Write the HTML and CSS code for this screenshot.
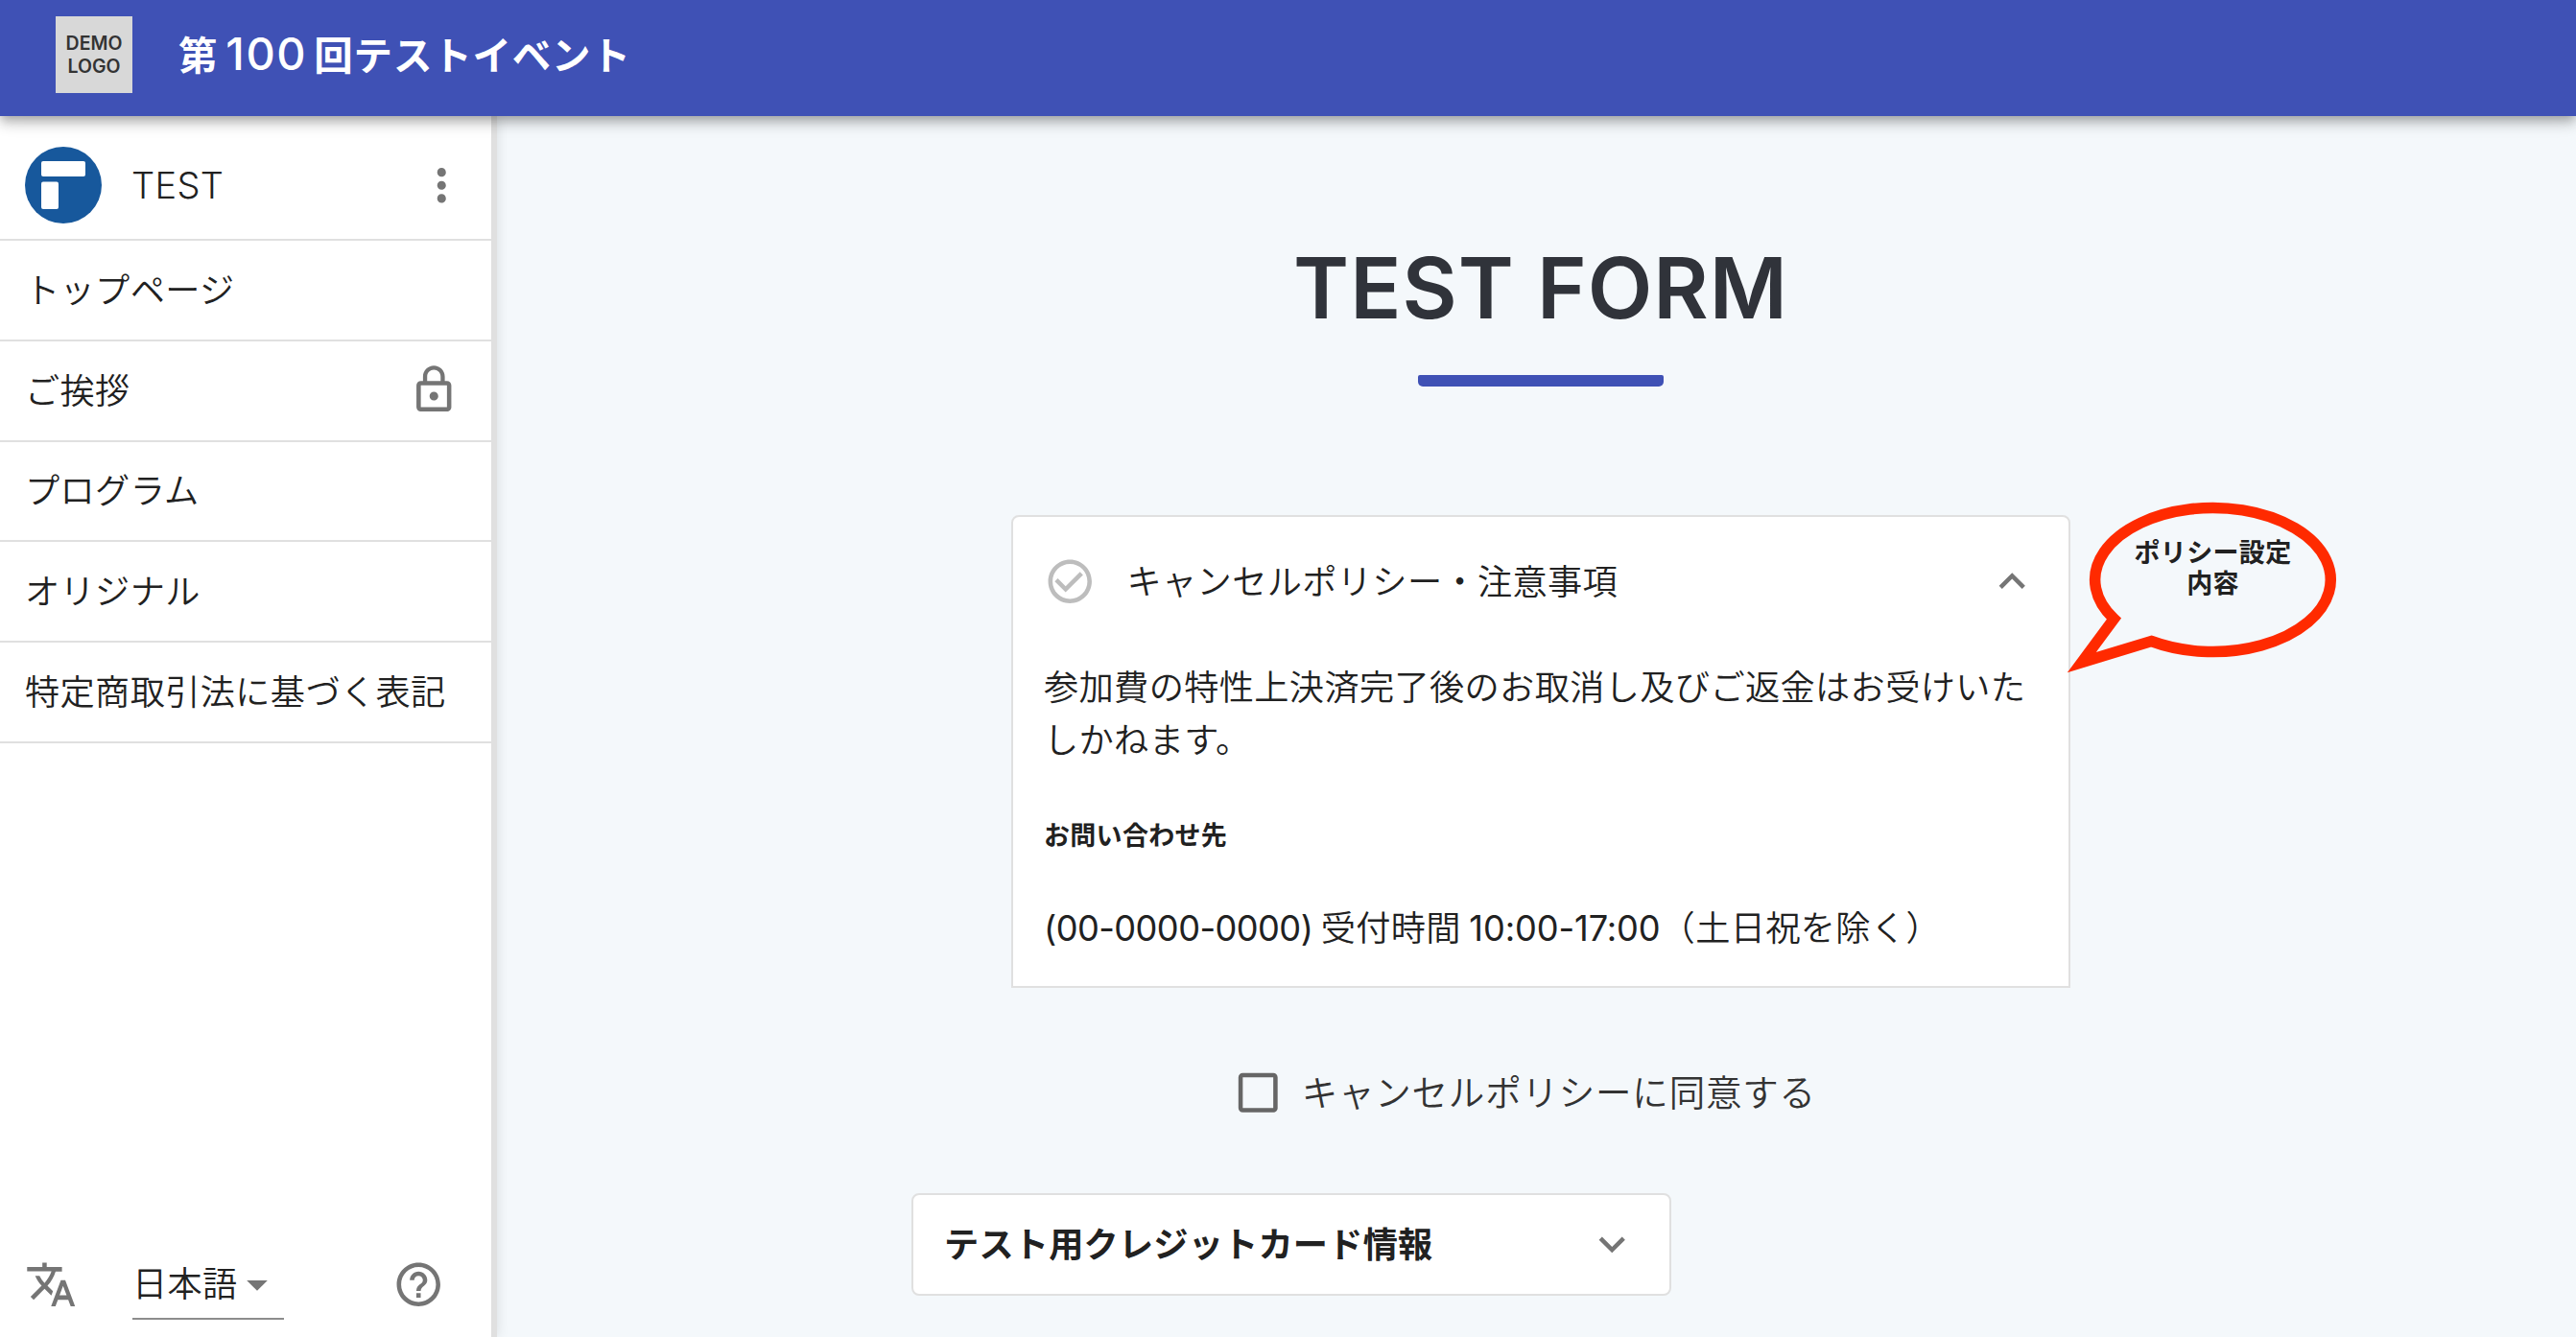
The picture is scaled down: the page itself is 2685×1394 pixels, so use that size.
FILE: index.html
```
<!DOCTYPE html>
<html lang="ja">
  <head>
    <meta charset="UTF-8" />
    <meta name="viewport" content="width=device-width, initial-scale=1.0" />
    <title>第100回テストイベント</title>
    <link rel="stylesheet" href="styles.css">
  </head>
  <body>
    <header class="app-bar">
      <div class="logo">DEMO<br />LOGO</div>
      <div class="event-name">第<span class="num">100</span>回テストイベント</div>
    </header>

    <div class="page">
      <aside class="sidebar">
        <div class="account">
          <svg class="avatar" viewBox="0 0 80 80">
            <circle cx="40" cy="40" r="40" fill="#17589c" />
            <rect x="17" y="15" width="46" height="16" rx="2" fill="#fff" />
            <rect x="17" y="36.5" width="18" height="28.5" rx="2" fill="#fff" />
          </svg>
          <span class="account-name">TEST</span>
          <svg class="icon" viewBox="0 0 24 24">
            <path d="M12 8c1.1 0 2-.9 2-2s-.9-2-2-2-2 .9-2 2 .9 2 2 2zm0 2c-1.1 0-2 .9-2 2s.9 2 2 2 2-.9 2-2-.9-2-2-2zm0 6c-1.1 0-2 .9-2 2s.9 2 2 2 2-.9 2-2-.9-2-2-2z" />
          </svg>
        </div>
        <nav class="menu">
          <a class="menu-item">トップページ</a>
          <a class="menu-item">
            ご挨拶
            <svg class="icon" viewBox="0 0 24 24">
              <path d="M12 17c1.1 0 2-.9 2-2s-.9-2-2-2-2 .9-2 2 .9 2 2 2zm6-9h-1V6c0-2.76-2.24-5-5-5S7 3.24 7 6v2H6c-1.1 0-2 .9-2 2v10c0 1.1.9 2 2 2h12c1.1 0 2-.9 2-2V10c0-1.1-.9-2-2-2zM8.9 6c0-1.71 1.39-3.1 3.1-3.1s3.1 1.39 3.1 3.1v2H8.9V6zM18 20H6V10h12v10z" />
            </svg>
          </a>
          <a class="menu-item">プログラム</a>
          <a class="menu-item">オリジナル</a>
          <a class="menu-item">特定商取引法に基づく表記</a>
        </nav>
        <div class="sidebar-footer">
          <svg class="icon" viewBox="0 0 24 24">
            <path d="M12.87 15.07l-2.54-2.51.03-.03c1.74-1.94 2.98-4.17 3.71-6.53H17V4h-7V2H8v2H1v1.99h11.17C11.5 7.92 10.44 9.75 9 11.35 8.07 10.32 7.3 9.19 6.69 8h-2c.73 1.63 1.73 3.17 2.98 4.56l-5.09 5.02L4 19l5-5 3.11 3.11.76-2.04zM18.5 10h-2L12 22h2l1.12-3h4.75L21 22h2l-4.5-12zm-2.62 7l1.62-4.33L19.12 17h-3.24z" />
          </svg>
          <div class="language">
            日本語
            <svg class="icon" viewBox="0 0 24 24"><path d="M7 10l5 5 5-5z" /></svg>
          </div>
          <svg class="icon" viewBox="0 0 24 24">
            <path d="M11 18h2v-2h-2v2zm1-16C6.48 2 2 6.48 2 12s4.48 10 10 10 10-4.48 10-10S17.52 2 12 2zm0 18c-4.41 0-8-3.59-8-8s3.59-8 8-8 8 3.59 8 8-3.59 8-8 8zm0-14c-2.21 0-4 1.79-4 4h2c0-1.1.9-2 2-2s2 .9 2 2c0 2-3 1.75-3 5h2c0-2.25 3-2.5 3-5 0-2.21-1.79-4-4-4z" />
          </svg>
        </div>
      </aside>

      <main class="content">
        <h1>TEST FORM</h1>

        <section class="policy">
          <div class="policy-head">
            <svg class="icon icon-check" viewBox="0 0 24 24">
              <path d="M16.59 7.58L10 14.17l-3.59-3.58L5 12l5 5 8-8zM12 2C6.48 2 2 6.48 2 12s4.48 10 10 10 10-4.48 10-10S17.52 2 12 2zm0 18c-4.42 0-8-3.58-8-8s3.58-8 8-8 8 3.58 8 8-3.58 8-8 8z" />
            </svg>
            <span class="policy-title">キャンセルポリシー・注意事項</span>
            <svg class="icon" viewBox="0 0 24 24">
              <path d="M12 8l-6 6 1.41 1.41L12 10.83l4.59 4.58L18 14z" />
            </svg>
          </div>
          <p class="policy-text">参加費の特性上決済完了後のお取消し及びご返金はお受けいた<br />しかねます。</p>
          <h2>お問い合わせ先</h2>
          <p class="policy-contact"><span class="phone">(00-0000-0000)</span> 受付時間 <span class="hours">10:00-17:00</span>（土日祝を除く）</p>

          <div class="callout">
            <svg class="callout-shape" viewBox="0 0 290 190">
              <path d="M53.4 133.3A122.8 75 0 1 1 92.4 156.5L19.8 178.6Z" />
            </svg>
            <p class="callout-text">ポリシー設定<br />内容</p>
          </div>
        </section>

        <label class="agree">
          <svg class="icon icon-box" viewBox="0 0 24 24">
            <path d="M19 5v14H5V5h14m0-2H5c-1.1 0-2 .9-2 2v14c0 1.1.9 2 2 2h14c1.1 0 2-.9 2-2V5c0-1.1-.9-2-2-2z" />
          </svg>
          <span>キャンセルポリシーに同意する</span>
        </label>

        <section class="card-info">
          <span>テスト用クレジットカード情報</span>
          <svg class="icon" viewBox="0 0 24 24">
            <path d="M16.59 8.59L12 13.17 7.41 8.59 6 10l6 6 6-6z" />
          </svg>
        </section>
      </main>
    </div>
  </body>
</html>
```

FILE: styles.css
```
* {
  box-sizing: border-box;
}

body {
  margin: 0;
  height: 100vh;
  display: flex;
  flex-direction: column;
  overflow: hidden;
  background-color: #f4f8fb;
  color: #212121;
  font-family: "Noto Sans CJK JP", sans-serif;
  font-size: 36.2px;
  font-weight: 350;
  letter-spacing: 0.36px;
}

h1,
h2,
p {
  margin: 0;
}

.icon {
  width: 54.5px;
  height: 54.5px;
  flex: none;
  fill: #757575;
}

/* header */
.app-bar {
  position: relative;
  z-index: 2;
  flex: none;
  height: 121px;
  padding: 0 58px 7px;
  display: flex;
  align-items: center;
  background-color: #3f51b5;
  color: #fff;
  box-shadow: 0 4px 9px -2px rgba(0, 0, 0, 0.2),
    0 9px 11px rgba(0, 0, 0, 0.14), 0 2px 22px rgba(0, 0, 0, 0.12);
}

.logo {
  width: 80px;
  height: 80px;
  padding-top: 16px;
  background-color: #d8d8d8;
  color: #333;
  font: 600 19.5px/24px Inter, sans-serif;
  letter-spacing: 0;
  text-align: center;
}

.event-name {
  margin-left: 48px;
  padding-bottom: 3px;
  font-size: 40.5px;
  font-weight: 700;
  line-height: 60px;
  letter-spacing: 0.8px;
  white-space: nowrap;
}

.event-name .num {
  margin: 0 7px 0 8px;
  font-family: Inter, sans-serif;
  font-size: 47px;
  font-weight: 500;
  line-height: 1;
  letter-spacing: 1.6px;
}

/* sidebar */
.page {
  flex: 1;
  display: flex;
  min-height: 0;
}

.sidebar {
  flex: none;
  width: 518px;
  display: flex;
  flex-direction: column;
  background-color: #fff;
  border-right: 6px solid #e0e0e0;
  box-shadow: 0 0 12px rgba(0, 0, 0, 0.12);
}

.account {
  height: 130px;
  padding: 16px 25px 0 26px;
  display: flex;
  align-items: center;
  border-bottom: 2px solid #e0e0e0;
}

.avatar {
  width: 80px;
  height: 80px;
}

.account-name {
  flex: 1;
  margin-left: 31px;
  font-family: Inter, sans-serif;
  font-size: 38px;
}

.menu-item {
  display: flex;
  align-items: center;
  justify-content: space-between;
  height: 104.8px;
  padding: 0 33px 5px 26px;
  border-bottom: 2px solid #e0e0e0;
}

.menu-item .icon {
  position: relative;
  top: 2px;
}

.sidebar-footer {
  margin-top: auto;
  height: 85px;
  padding: 0 49px 0 26px;
  display: flex;
  justify-content: space-between;
}

.sidebar-footer > .icon {
  margin-top: 3px;
}

.language {
  width: 158px;
  height: 67px;
  margin-right: 55px;
  display: flex;
  line-height: 54px;
  border-bottom: 2px solid #8c8c8c;
}

.language .icon {
  width: 52px;
  margin: 3px 0 0 -6px;
}

/* form */
.content {
  flex: 1;
  padding: 110px 0 0 9px;
  display: flex;
  flex-direction: column;
  align-items: center;
}

h1 {
  color: #30333a;
  font-family: Inter, sans-serif;
  font-size: 88px;
  font-weight: 600;
  line-height: 138px;
  letter-spacing: 1px;
}

h1::after {
  content: "";
  display: block;
  width: 256px;
  height: 12px;
  margin: 22px auto 0;
  border-radius: 2px 2px 5px 5px;
  background-color: #3f51b5;
}

.policy {
  position: relative;
  width: 1104px;
  height: 493px;
  margin-top: 134px;
  padding: 39px 32px 0;
  background-color: #fff;
  border: 2px solid #e0e0e0;
  border-radius: 8px 8px 0 0;
}

.policy-head {
  display: flex;
  align-items: center;
}

.policy-head .icon-check {
  margin: 0 32px 0 0;
  fill: #bdbdbd;
}

.policy-title {
  flex: 1;
  padding-bottom: 4px;
}

.policy-text {
  margin-top: 53px;
  line-height: 55px;
  white-space: nowrap;
}

.policy h2 {
  margin-top: 53px;
  font-size: 27px;
  font-weight: 700;
  line-height: 40px;
  letter-spacing: 0.3px;
}

.policy-contact {
  margin-top: 48px;
  line-height: 54px;
  white-space: nowrap;
}

.phone,
.hours {
  font-family: Inter, sans-serif;
  font-weight: 400;
}

.phone {
  letter-spacing: -0.55px;
}

.hours {
  letter-spacing: -0.1px;
}

/* speech bubble pointing at the policy card */
.callout {
  position: absolute;
  left: 1094px;
  top: -27px;
  width: 290px;
  height: 190px;
}

.callout-shape {
  position: absolute;
  width: 290px;
  height: 190px;
  overflow: visible;
  fill: none;
  stroke: #ff2a00;
  stroke-width: 11.5;
  stroke-miterlimit: 10;
}

.callout-text {
  position: relative;
  padding: 47px 0 0 23px;
  font-size: 27px;
  font-weight: 600;
  line-height: 32px;
  text-align: center;
}

.agree {
  display: flex;
  align-items: center;
  height: 60px;
  margin-top: 79px;
  margin-right: 35px;
  color: #333;
  font-size: 37.5px;
  letter-spacing: 0.8px;
}

.agree span {
  padding-bottom: 5px;
}

.icon-box {
  margin-right: 18px;
  fill: #666;
}

.card-info {
  width: 792px;
  height: 107px;
  margin-top: 75px;
  margin-right: 520px;
  padding: 0 33px 0 32px;
  display: flex;
  align-items: center;
  justify-content: space-between;
  background-color: #fff;
  border: 2px solid #e0e0e0;
  border-radius: 8px;
  font-weight: 700;
  letter-spacing: 0.2px;
}

.card-info span {
  padding-bottom: 6px;
}
```
